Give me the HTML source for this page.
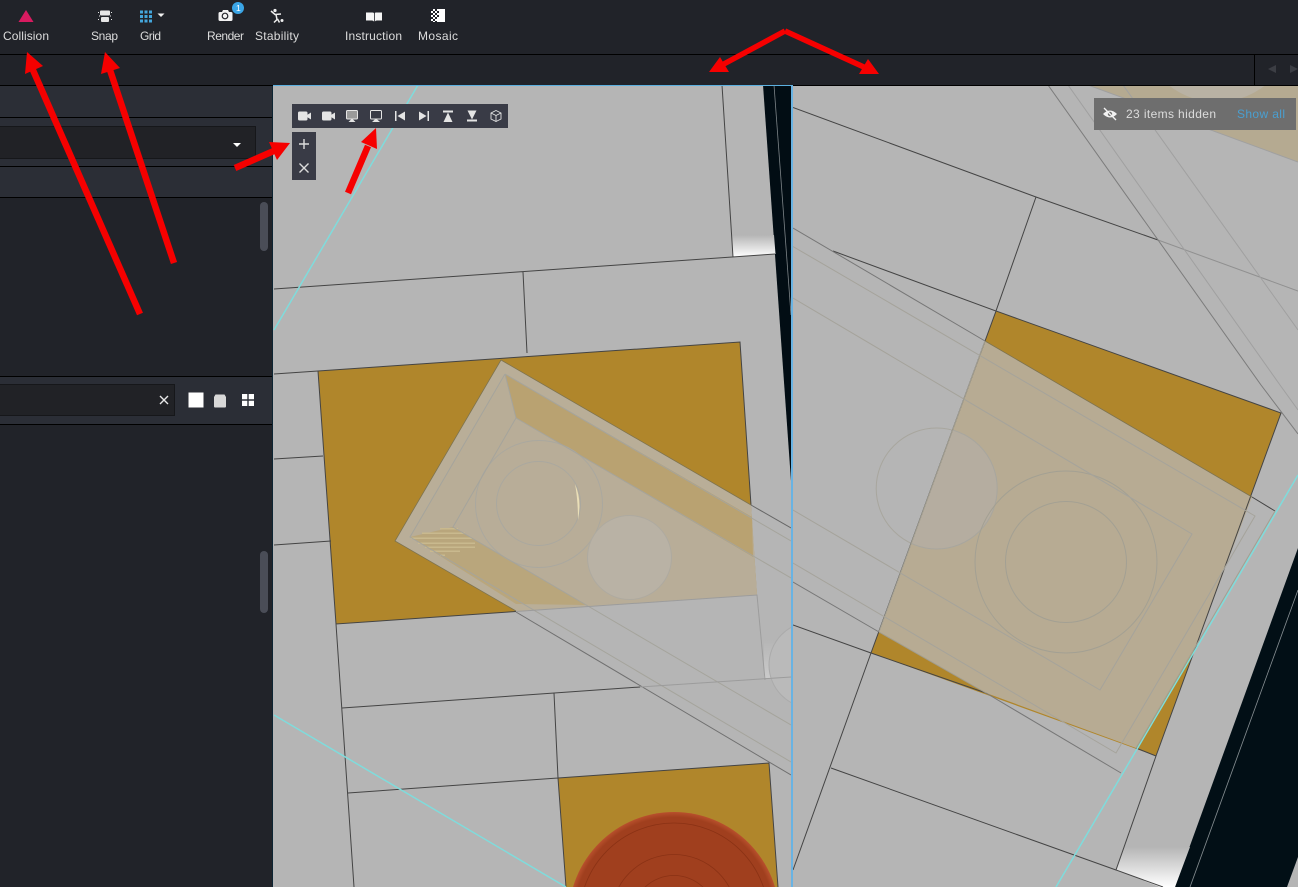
<!DOCTYPE html>
<html><head><meta charset="utf-8"><title>Viewport</title>
<style>
html,body{margin:0;padding:0;background:#212329;width:1298px;height:887px;overflow:hidden}
svg{display:block;position:absolute;left:0;top:0;filter:blur(.35px)}
text{font-family:"Liberation Sans",sans-serif;font-size:12px;fill:#dcdcdc}
</style></head><body>
<svg width="1298" height="887" viewBox="0 0 1298 887" xmlns="http://www.w3.org/2000/svg">
<defs>
<clipPath id="cl"><rect x="273" y="86" width="518" height="801"/></clipPath>
<clipPath id="cr"><rect x="793" y="86" width="505" height="801"/></clipPath>
<clipPath id="tan"><polygon points="985,341 1252,497 1195,648 1136,748 986,693 879,632"/></clipPath>
<linearGradient id="wg" x1="0" y1="0" x2="0" y2="1"><stop offset="0" stop-color="#b5b5b5"/><stop offset="1" stop-color="#fff"/></linearGradient>
<linearGradient id="wg2" x1="0" y1="0" x2="0" y2="1"><stop offset="0" stop-color="#b5b5b5"/><stop offset="1" stop-color="#d8d8d8"/></linearGradient>
<radialGradient id="rg" cx="0.5" cy="0.5" r="0.5"><stop offset="0.95" stop-color="#a03f1e"/><stop offset="1" stop-color="#b8502c"/></radialGradient>
</defs>

<!-- chrome -->
<rect width="1298" height="887" fill="#212329"/>
<rect x="0" y="54" width="1298" height="1" fill="#000"/>
<rect x="0" y="85" width="273" height="1" fill="#000"/>
<rect x="1254" y="55" width="1" height="30" fill="#000"/>
<path d="M1268 69l8-4v8zM1298 69l-8-4v8z" fill="#3c3e44"/>

<!-- left panel -->
<rect x="0" y="86" width="272" height="31" fill="#2b2e36"/>
<rect x="0" y="117" width="272" height="1" fill="#000"/>
<rect x="0" y="118" width="272" height="48" fill="#2b2e36"/>
<rect x="0" y="126" width="256" height="33" fill="#16171a"/>
<rect x="0" y="127" width="255" height="31" fill="#212226"/>
<path d="M233 143h8l-4 4z" fill="#fff"/>
<rect x="0" y="166" width="272" height="1" fill="#000"/>
<rect x="0" y="167" width="272" height="30" fill="#2b2e36"/>
<rect x="0" y="197" width="272" height="1" fill="#000"/>
<rect x="260" y="202" width="8" height="49" rx="4" fill="#4a4d57"/>
<rect x="260" y="551" width="8" height="62" rx="4" fill="#4a4d57"/>
<rect x="0" y="376" width="272" height="1" fill="#000"/>
<rect x="0" y="377" width="272" height="47" fill="#2b2e36"/>
<rect x="0" y="384" width="175" height="32" fill="#16171a"/>
<rect x="0" y="385" width="174" height="30" fill="#212226"/>
<path d="M160 396l8 8M168 396l-8 8" stroke="#e8e8e8" stroke-width="1.400" fill="none"/>
<rect x="188.500" y="392.500" width="15" height="15" fill="#fff"/>
<path d="M214 397l1.500-2.500h9l1.500 2.500v9.500a1 1 0 0 1-1 1h-10a1 1 0 0 1-1-1z" fill="#d8d8d8"/>
<path d="M242 394h5.300v5.300H242zM248.700 394h5.300v5.300h-5.300zM242 400.700h5.300v5.300H242zM248.700 400.700h5.300v5.300h-5.300z" fill="#fff"/>
<rect x="0" y="424" width="272" height="1" fill="#000"/>
<rect x="272" y="86" width="1" height="801" fill="#0d2533"/>

<!-- LEFT VIEWPORT -->
<g clip-path="url(#cl)">
<rect x="273" y="86" width="518" height="801" fill="#b5b5b5"/>
<polygon points="763,85 791,85 791,481" fill="#020d14"/>
<polygon points="732,235 774,235 775.500,254 733,257" fill="url(#wg)"/>
<polygon points="318,371 740,342 757,595 336,624" fill="#b0862b"/>
<polygon points="558,778 769,763 778,887 566,887" fill="#b0862b"/>
<rect x="764" y="640" width="27" height="38" fill="url(#wg2)" opacity=".6"/>

<!-- tile tan part -->
<polygon points="501,360 395,541 516.600,611.500 757,595 751,505" fill="#b9ae98"/>
<polygon points="505,374 410,537 501,590 590,605 757,595 752,517" fill="#b8ad97"/>
<polygon points="505,374 516,418 753,557 752,517" fill="#b9a271"/>
<polygon points="453,527 410,537 516,604 586,605" fill="#b9a67c"/>
<polygon points="453,527 516,418 753,557 757,595 586,605" fill="#b8ad98"/>
<circle cx="539" cy="504" r="63.500" fill="#b8ad98" stroke="#aaa89f" stroke-width="1"/>
<circle cx="538.500" cy="503.500" r="42" fill="#b8ad98" stroke="#aaa89f" stroke-width="1"/>
<path d="M575 484Q582 500 578 520Q578 500 575 484Z" fill="#eadfb8"/>
<circle cx="629.500" cy="557.500" r="42" fill="#b9b2a5" stroke="#aeaaa0" stroke-width="1"/>
<circle cx="812" cy="665" r="43" fill="#bababa" stroke="#ababab" stroke-width="1"/>
<g fill="#c9b98e">
<rect x="440" y="528" width="18" height="1.500"/><rect x="422" y="532.500" width="43" height="1.500"/>
<rect x="411" y="537.500" width="61" height="1.500"/><rect x="418" y="542.500" width="57" height="1.500"/>
<rect x="425" y="546.500" width="50" height="1.500"/><rect x="430" y="550.500" width="30" height="1.500"/>
<rect x="440" y="554.500" width="5" height="1.500"/>
</g>

<g fill="none" stroke-width="1">
<path d="M274 289L775 254M722 85L733 257M523 272L527 353M274 374L318 371M274 459L323 456M274 545L331 541" stroke="#444"/>
<path d="M318 371L740 342L751 505M318 371L336 624L516 611.500M336 624L354 887M342 708L640 687M348 793L558 778L769 763L778 887M558 778L566 887M554 693L558 778" stroke="#444"/>
<path d="M501 360L751 505M501 360L395 541L516 611" stroke="#7d7350" stroke-width=".8"/>
<path d="M751 505L791 528" stroke="#666"/>
<path d="M516 612L791 775" stroke="#707070"/>
<path d="M505 374L410 537L791 762M505 374L791 541M516 418L791 578M516 418L453 527L791 725M505 374L516 418" stroke="#a5a49c"/>
<path d="M516 611.500L757 595L765 680M640 687L791 677" stroke="#9c9c9c"/>
<path d="M774 85L791 315" stroke="#7d8488" stroke-width=".8"/>
</g>
<circle cx="674" cy="917.500" r="105.500" fill="url(#rg)"/>
<g fill="none" stroke="#8a3215" stroke-width=".8">
<circle cx="674" cy="917.500" r="94.500"/><circle cx="674" cy="917.500" r="63"/><circle cx="674" cy="917.500" r="42"/>
</g>
<path d="M418 85L274 330M274 715L566 887" stroke="#7fdcdc" stroke-width="1.500" fill="none"/>
</g>
<rect x="273" y="85" width="518" height="1" fill="#5cb0e0"/>
<rect x="791" y="85" width="2" height="802" fill="#69b3e3"/>

<!-- RIGHT VIEWPORT -->
<rect x="793" y="85" width="505" height="1" fill="#000"/>
<g clip-path="url(#cr)">
<rect x="793" y="86" width="505" height="801" fill="#b5b5b5"/>
<polygon points="1088,85 1298,162 1298,85" fill="#b5aa91"/>
<circle cx="1217" cy="24" r="78" fill="#b9b2a4"/>
<polygon points="1298,548 1175,887 1287,887 1298,857" fill="#020f16"/>
<polygon points="1124,847 1190,847 1175,887 1160,887 1116,870" fill="url(#wg)"/>
<polygon points="996,311 1281,413 1156,756 871,653" fill="#b0862b"/>
<polygon points="985,341 1252,497 1195,648 1136,748 986,693 879,632" fill="#b7ab93"/>
<circle cx="936.700" cy="488.500" r="60.500" fill="#b5ada0" clip-path="url(#tan)"/>
<circle cx="936.700" cy="488.500" r="60.500" fill="none" stroke="#a8a69e" stroke-width="1"/>
<circle cx="1066" cy="562" r="91" fill="none" stroke="#a3a093" stroke-width="1"/>
<circle cx="1066" cy="562" r="60.500" fill="none" stroke="#a3a093" stroke-width="1"/>
<g fill="none" stroke-width="1">
<path d="M793 107.500L1036 197L1158 240M1036 197L996 311L1281 413L1156 756L1116 870L1163 887M833 251L996 311L871 653M793 625L871 653L986 693M1136 748L1156 756M871 653L793 870M831 768L1116 870M1252 497L1275 511" stroke="#444"/>
<path d="M985 341L1252 497" stroke="#7d7350" stroke-width=".8"/>
<path d="M793 228L985 341M986 693L1121 773M793 582L879 632" stroke="#777"/>
<path d="M879 632L986 693" stroke="#a09c8e"/>
<path d="M1158 240L1298 291" stroke="#909090"/>
<path d="M1048 85L1261 385L1298 434" stroke="#7c7c7c"/>
<path d="M1068 85L1280 385L1298 410M1123 85L1298 330M1088 85L1298 162" stroke="#a0a0a0"/>
<path d="M793 246.500L1255 516L1116 753L793 563M793 298L1192 534L1100 690L793 510" stroke="#a5a39b"/>
<path d="M1275 511L1136 748M985 341L879 632" stroke="#a4a092"/>
<path d="M1190 887L1298 590" stroke="#8a9296" stroke-width=".8"/>
</g>
<path d="M1298 475L1056 887" stroke="#7fdcdc" stroke-width="1.500" fill="none"/>
</g>

<!-- hidden badge -->
<rect x="1094" y="98" width="202" height="32" fill="#6e6e6e"/>
<path d="M1103 114q7-7 14 0q-7 7-14 0z" fill="#f2f2f2"/>
<circle cx="1110" cy="114" r="2.200" fill="#6e6e6e"/>
<path d="M1104 108l12 12" stroke="#f2f2f2" stroke-width="1.300"/>
<text x="1126" y="118" textLength="90" lengthAdjust="spacing">23 items hidden</text>
<text x="1237" y="118" textLength="48" lengthAdjust="spacing" style="fill:#4a9fd0">Show all</text>

<!-- top toolbar icons -->
<polygon points="26,10 33.500,22 18.500,22" fill="#d81b60"/>
<g fill="#e6e6e6">
<rect x="100" y="10.500" width="10" height="5" rx="1"/><rect x="101" y="17" width="8" height="5" rx="1"/>
<rect x="98" y="12" width="1" height="1"/><rect x="98" y="19" width="1" height="1"/><rect x="111" y="12" width="1" height="1"/><rect x="111" y="19" width="1" height="1"/><rect x="99" y="15.500" width="1" height="1"/><rect x="110" y="15.500" width="1" height="1"/>
</g>
<g fill="#44a6dc">
<rect x="140" y="10.500" width="3" height="3"/><rect x="144.500" y="10.500" width="3" height="3"/><rect x="149" y="10.500" width="3" height="3"/>
<rect x="140" y="15" width="3" height="3"/><rect x="144.500" y="15" width="3" height="3"/><rect x="149" y="15" width="3" height="3"/>
<rect x="140" y="19.500" width="3" height="3"/><rect x="144.500" y="19.500" width="3" height="3"/><rect x="149" y="19.500" width="3" height="3"/>
</g>
<path d="M157.500 13.500h7l-3.500 3.500z" fill="#f2f2f2"/>
<path d="M220 12h2l1-2h5l1 2h2a1.500 1.500 0 0 1 1.500 1.500v6a1.500 1.500 0 0 1-1.500 1.500h-11a1.500 1.500 0 0 1-1.500-1.500v-6a1.500 1.500 0 0 1 1.500-1.500z" fill="#f2f2f2"/>
<circle cx="225" cy="16" r="2.800" fill="none" stroke="#212329" stroke-width="1.200"/>
<circle cx="238" cy="8" r="6" fill="#3aa5e6"/>
<text x="236" y="11" style="font-size:8.500px;fill:#fff">1</text>
<g fill="none" stroke="#eee" stroke-width="1.500">
<path d="M271 11l4 3.500l6-0.500M276 14.500l1 5l-3 3M277.500 19l2 3.500"/>
</g>
<circle cx="275" cy="10.500" r="1.600" fill="#eee"/><circle cx="282" cy="20.500" r="1.500" fill="#eee"/>
<path d="M366 12.500h6.500q1.500 0 1.500 1v8q-1-1-2-1h-6zM382 12.500h-6.200q-1 0-1 1v8q1-1 2-1h5.200z" fill="#f5f5f5"/>
<rect x="431" y="9" width="14" height="13" fill="#fff"/>
<g fill="#212329">
<rect x="431" y="9" width="2" height="2"/><rect x="435" y="9" width="2" height="2"/><rect x="433" y="11" width="2" height="2"/><rect x="437" y="11" width="2" height="2"/>
<rect x="431" y="13" width="2" height="2"/><rect x="435" y="13" width="2" height="2"/><rect x="433" y="15" width="2" height="2"/><rect x="437" y="15" width="2" height="2"/>
<rect x="431" y="17" width="2" height="2"/><rect x="435" y="17" width="2" height="2"/><rect x="433" y="19" width="2" height="2"/><rect x="431" y="21" width="2" height="1"/><rect x="435" y="21" width="2" height="1"/>
</g>
<text x="3" y="40" textLength="46" lengthAdjust="spacing">Collision</text>
<text x="91" y="40" textLength="27" lengthAdjust="spacing">Snap</text>
<text x="140" y="40" textLength="21" lengthAdjust="spacing">Grid</text>
<text x="207" y="40" textLength="37" lengthAdjust="spacing">Render</text>
<text x="255" y="40" textLength="44" lengthAdjust="spacing">Stability</text>
<text x="345" y="40" textLength="57" lengthAdjust="spacing">Instruction</text>
<text x="418" y="40" textLength="40" lengthAdjust="spacing">Mosaic</text>

<!-- viewport toolbar -->
<rect x="292" y="104" width="216" height="24" fill="#393b46"/>
<rect x="292" y="132" width="24" height="48" fill="#393b46"/>
<g fill="#e4e4e4">
<rect x="298" y="111.500" width="9.500" height="9" rx="1.500"/><path d="M307 115l4-2.500v7l-4-2.500z"/>
<rect x="322" y="111.500" width="9.500" height="9" rx="1.500"/><path d="M331 115l4-2.500v7l-4-2.500z"/>
<rect x="346.500" y="110.500" width="11" height="8.500" rx="1" fill="#9a9a9a" stroke="#e4e4e4"/><path d="M352 118.500l3.500 3.500h-7z"/>
<rect x="370.500" y="110.500" width="11" height="8.500" rx="1" fill="none" stroke="#e4e4e4"/><path d="M376 118.500l4 3.500h-8z"/>
<rect x="395" y="111" width="1.500" height="10"/><path d="M405 111.500v9l-7.500-4.500z"/>
<rect x="427.500" y="111" width="1.500" height="10"/><path d="M419 111.500v9l7.500-4.500z"/>
<rect x="443" y="110.500" width="10" height="2"/><path d="M448 112.500l4.500 9.500h-9z"/>
<rect x="467" y="119.500" width="10" height="2"/><path d="M472 119.500l-4.500-9h9z"/>
</g>
<path d="M496 110.500l5 2.500v6l-5 2.500l-5-2.500v-6zM491 113l5 2.500l5-2.500M496 115.500v6" fill="none" stroke="#e4e4e4" stroke-width=".9"/>
<path d="M304 139v10M299 144h10" stroke="#dcdcdc" stroke-width="1.400" fill="none"/>
<path d="M299.500 163.500l9 9M308.500 163.500l-9 9" stroke="#dcdcdc" stroke-width="1.400" fill="none"/>

<!-- red annotation arrows -->
<g fill="#f60000" stroke="none">
<path d="M140 314L32.500 69" stroke="#f60000" stroke-width="6.500" fill="none"/><polygon points="27,52 43,66 25,74"/>
<path d="M174 263L110 70" stroke="#f60000" stroke-width="6.500" fill="none"/><polygon points="105,52 120,68 101,74"/>
<path d="M235 168L276 150" stroke="#f60000" stroke-width="6.500" fill="none"/><polygon points="290,143 277,160 269,142"/>
<path d="M348 193L368 146" stroke="#f60000" stroke-width="6.500" fill="none"/><polygon points="376,128 377,149 361,142"/>
<path d="M785 31L722 65M785 31L866 68" stroke="#f60000" stroke-width="5.500" fill="none"/>
<polygon points="709,72 720,57 729,72"/><polygon points="879,74 868,59 859,74"/>
</g>
</svg>
</body></html>
